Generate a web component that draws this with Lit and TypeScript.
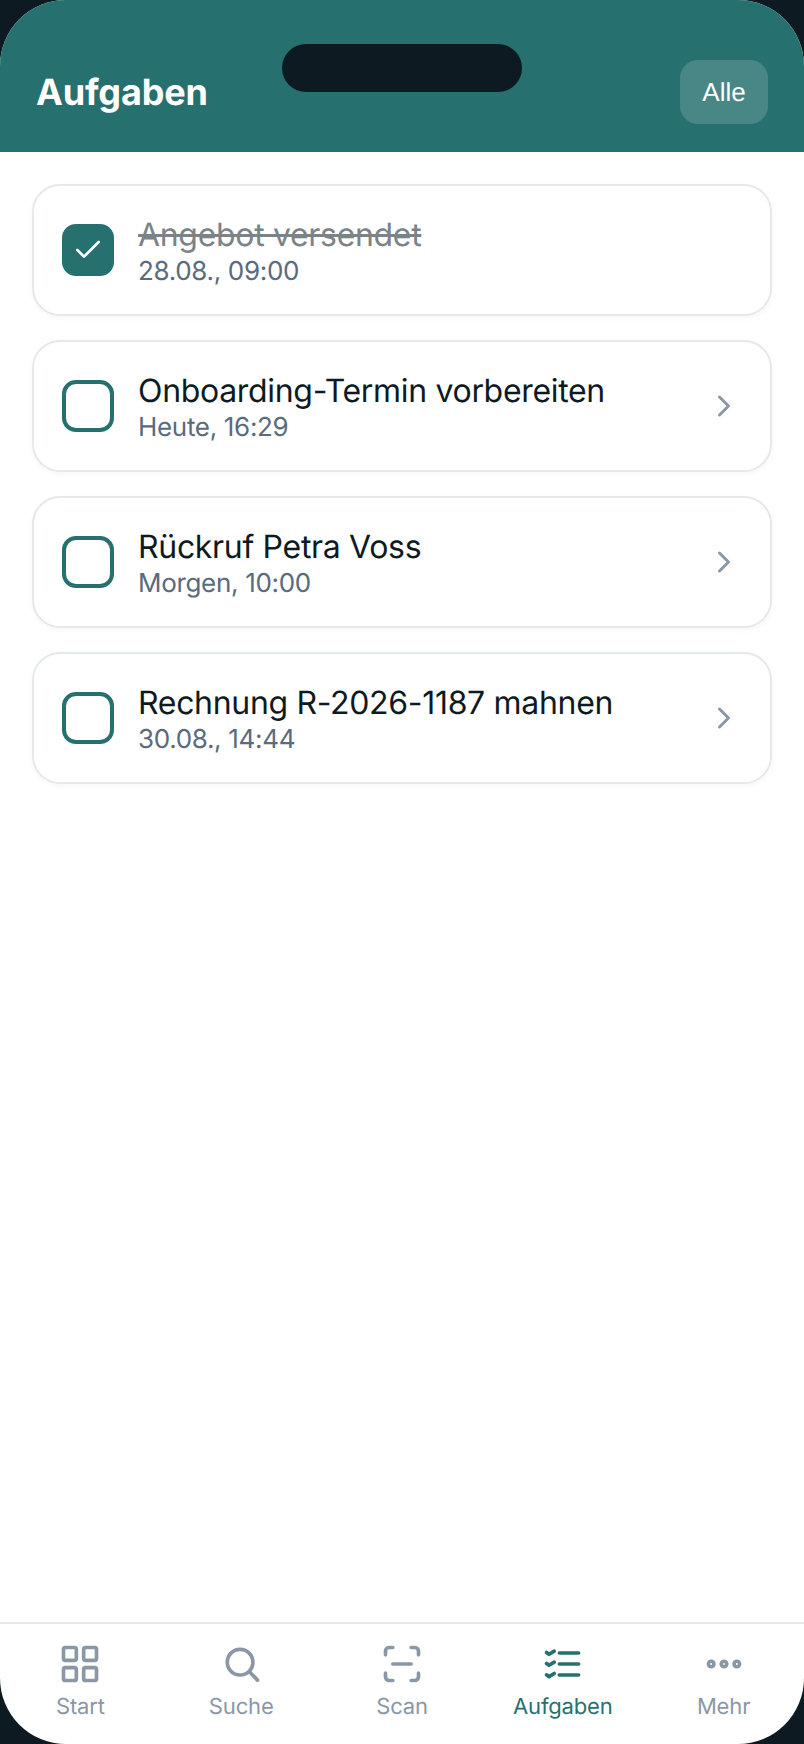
import { LitElement, html, css, svg } from 'lit';
import { customElement } from 'lit/decorators.js';

const tasks = [
  { title: 'Angebot versendet', when: '28.08., 09:00', done: true },
  { title: 'Onboarding-Termin vorbereiten', when: 'Heute, 16:29', done: false },
  { title: 'Rückruf Petra Voss', when: 'Morgen, 10:00', done: false },
  { title: 'Rechnung R-2026-1187 mahnen', when: '30.08., 14:44', done: false },
];

const navItems = [
  {
    label: 'Start',
    icon: svg`<rect x="3" y="3" width="7" height="7" rx="1"/><rect x="14" y="3" width="7" height="7" rx="1"/><rect x="3" y="14" width="7" height="7" rx="1"/><rect x="14" y="14" width="7" height="7" rx="1"/>`,
  },
  {
    label: 'Suche',
    icon: svg`<circle cx="11.5" cy="11" r="7"/><path d="m16.6 16.2 4.4 4.6"/>`,
  },
  {
    label: 'Scan',
    icon: svg`<path d="M3 7V5a2 2 0 0 1 2-2h2"/><path d="M17 3h2a2 2 0 0 1 2 2v2"/><path d="M21 17v2a2 2 0 0 1-2 2h-2"/><path d="M7 21H5a2 2 0 0 1-2-2v-2"/><path d="M7 12h10"/>`,
  },
  {
    label: 'Aufgaben',
    icon: svg`<path d="M10 6h10.5"/><path d="M10 12h10.5"/><path d="M10 18h10.5"/><path d="m3 5.7 1.4 1 2.8-1.7"/><path d="m3 11.7 1.4 1 2.8-1.7"/><path d="m3 17.9 1.4 1 2.8-1.7"/>`,
    active: true,
  },
  {
    label: 'Mehr',
    icon: svg`<circle cx="5" cy="12" r="1.5"/><circle cx="12" cy="12" r="1.5"/><circle cx="19" cy="12" r="1.5"/>`,
  },
];

@customElement('app-root')
export class AppRoot extends LitElement {
  static styles = css`
    :host {
      display: block;
      background: #0e1a22;
      font-family: Inter, "Liberation Sans", sans-serif;
      text-rendering: geometricPrecision;
      letter-spacing: -0.01em;
    }
    .phone {
      position: relative;
      height: 1744px;
      display: flex;
      flex-direction: column;
      background: #fff;
      border-radius: 66px;
      overflow: hidden;
    }
    .notch {
      position: absolute;
      left: 282px;
      top: 44px;
      width: 240px;
      height: 48px;
      border-radius: 24px;
      background: #0e1a22;
    }
    .header {
      height: 152px;
      box-sizing: border-box;
      flex: none;
      display: flex;
      align-items: flex-end;
      justify-content: space-between;
      padding: 0 36px 28px 36px;
      background: #26706f;
    }
    .header h1 {
      margin: 0 0 10px;
      font-size: 36px;
      line-height: 44px;
      font-weight: 700;
      color: #fff;
    }
    .filter {
      width: 88px;
      height: 64px;
      padding: 0;
      border: 0;
      border-radius: 18px;
      background: rgba(255, 255, 255, 0.16);
      color: #fff;
      font-family: "Liberation Sans", sans-serif;
      font-size: 26px;
      text-rendering: geometricPrecision;
    }
    .list {
      flex: 1;
      display: flex;
      flex-direction: column;
      gap: 24px;
      padding: 32px 32px 0;
    }
    .card {
      height: 132px;
      box-sizing: border-box;
      display: flex;
      align-items: center;
      gap: 24px;
      padding: 0 28px;
      border: 2px solid #e4e9ec;
      border-radius: 28px;
      background: #fff;
      box-shadow: 0 2px 6px rgba(14, 26, 34, 0.04);
    }
    .box {
      flex: none;
      width: 52px;
      height: 52px;
      box-sizing: border-box;
      display: flex;
      align-items: center;
      justify-content: center;
      border: 4px solid #26706f;
      border-radius: 14px;
    }
    .box.done {
      background: #26706f;
    }
    .box svg {
      flex: none;
      width: 32px;
      height: 32px;
      fill: none;
      stroke: #fff;
      stroke-width: 2;
      stroke-linecap: round;
      stroke-linejoin: round;
    }
    .text {
      flex: 1;
      min-width: 0;
      padding-top: 2px;
      letter-spacing: -0.02em;
    }
    .title {
      font-size: 32px;
      line-height: 40px;
      color: #0e1a22;
    }
    .done-title {
      color: #7b8388;
      text-decoration: line-through;
    }
    .when {
      margin-top: 2px;
      font-size: 26px;
      line-height: 30px;
      color: #5a6b7d;
    }
    .chev {
      flex: none;
      width: 36px;
      height: 36px;
      fill: none;
      stroke: #8a97a6;
      stroke-width: 2;
      stroke-linecap: round;
      stroke-linejoin: round;
    }
    .nav {
      flex: none;
      height: 122px;
      box-sizing: border-box;
      display: grid;
      grid-template-columns: repeat(5, 1fr);
      border-top: 2px solid #e4e9ec;
      padding-top: 18px;
    }
    .item {
      display: flex;
      flex-direction: column;
      align-items: center;
      color: #8a97a6;
      font-size: 22px;
      line-height: 28px;
    }
    .item.active {
      color: #26706f;
    }
    .item svg {
      width: 44px;
      height: 44px;
      margin-bottom: 7px;
      fill: none;
      stroke: currentColor;
      stroke-width: 2;
      stroke-linecap: round;
      stroke-linejoin: round;
    }
  `;

  render() {
    return html`
      <div class="phone">
        <div class="header">
          <h1>Aufgaben</h1>
          <button class="filter">Alle</button>
        </div>
        <div class="notch"></div>
        <div class="list">
          ${tasks.map(
            (t) => html`
              <div class="card">
                <div class="box ${t.done ? 'done' : ''}">
                  ${t.done ? html`<svg viewBox="0 0 24 24"><path d="M20 6 9 17l-5-5"/></svg>` : ''}
                </div>
                <div class="text">
                  <div class="title ${t.done ? 'done-title' : ''}">${t.title}</div>
                  <div class="when">${t.when}</div>
                </div>
                ${t.done ? '' : html`<svg class="chev" viewBox="0 0 24 24"><path d="m9 18 6-6-6-6"/></svg>`}
              </div>
            `,
          )}
        </div>
        <div class="nav">
          ${navItems.map(
            (n) => html`
              <div class="item ${n.active ? 'active' : ''}">
                <svg viewBox="0 0 24 24">${n.icon}</svg>
                <span>${n.label}</span>
              </div>
            `,
          )}
        </div>
      </div>
    `;
  }
}
